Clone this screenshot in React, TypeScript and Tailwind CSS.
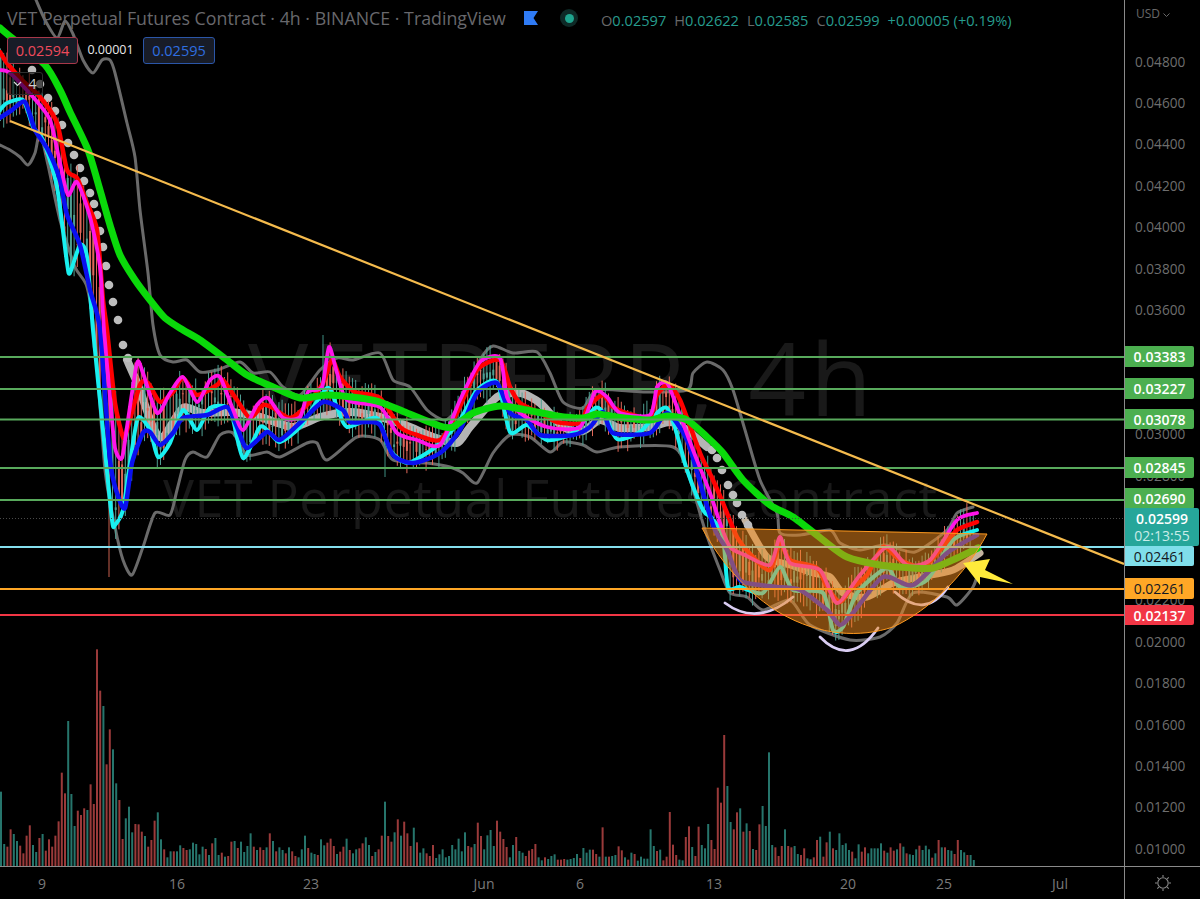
import React from 'react';

// volume tops read off the chart: value + colour, with the baseline each run was read against
const volA = '455g 612g 620r 568r 582g 603g 617r 640r 587r 556r 615g 636g 594r 582g 632r 598r 620r 587r 544r 398r 460r 243g 462g 558g 512r 525r 505r 510g 433r 492r 28r 152r 198g 373r 268r 328g 430g 480r 597r 535g 500g 577g 552r 553r 575r 588g 620r 600r 542r 517g 598g 628r 652g 634g 634r 634g 616g 624r 630r 628g 608g 612g 643g 620g 627r 645g 610r 594g 645g 638r 650g 648r 605r 603g 624r 605g 636g 618g 580g 620r 630g 622r 630r 622g 580r 603g 634r 622g 630g 640r 622g 634r 648r 652g 628g 587g 624r 638g 642g 645r 598g 616g 608r 596r 618r 642g 635r 620r 596g 630r 640g 628g 625r 610r 592g 615g 648r 636g 628r 587r 485g 588r 605r 577g 538r 587g 545r 580r 618r 563g 607r 638g 625g 640r 648r 615r 654g 643g 628g 652g 648g 615g 628g 596g 634g 577g 618r 622r 612g';
const volB = '128r 168r 208g 166g 150g 198g 122r 155r 177r 201r 232g 195g 171r 213g 218g 228r 212r 207r 192r 232g 241g 232r 237g 228g 223g 239r 239r 237r 239g 237g 234g 222g 234r 204g 218g 209g 209r 222r 230g 142r 230g 230r 228g 225g 199r 211r 232g 239r 218g 222r 242g 230g 236g 236g 148g 198g 213r 209g 241r 230r 96r 194r 225r 239g 241g 171r 139r 201g 228r';
const volC = '320r 375g 385g 312g 360r 387r 203r 248r 45r 198g 306g 328r 277r 265g 335r 310g 333r 387g 390r 313r 258g 318g 97g 375g 382r 408r 378r 328g 378r 382r 378g 402g 405r 385r 415g 418g 412r 360r 350g 410r 367r 335g 385r 390g 340g 375g 370g 390g 395r 415g 373g 395r 382r 400g 385g 385g 385g 370g 392r 398g 382r 392r 388g 370r 380g 400r 403g 405g 388g 377r 390g 377g 388g 413r 400g 360r 382g 382r 390g 392g 402r 360r 390g 397g 405r 405g 420g';

const parseVol = (s: string, base: number) =>
  s.split(' ').map((t) => ({ h: (base - parseInt(t)) / 3, up: t.endsWith('g') }));
const volume = [...parseVol(volA, 678), ...parseVol(volB, 258), ...parseVol(volC, 438)];

const red = '0,52 7,63 22,80 40,97 57,123 67,170 77,178 87,203 97,230 103,300 107,330 115,403 123,437 127,430 140,385 148,383 160,402 173,392 183,378 197,395 217,385 223,380 237,400 250,418 263,405 273,408 290,418 307,405 323,383 332,360 340,377 355,392 380,398 400,427 417,435 440,440 457,413 477,370 500,360 510,387 520,403 540,413 557,422 580,423 588,407 603,395 613,407 633,415 650,418 657,395 668,385 680,400 700,453 713,480 723,503 737,537 753,557 770,570 780,543 790,560 817,568 827,587 840,602 850,590 867,575 883,547 900,560 923,567 940,550 957,530 977,522';
const magenta = '0,70 10,73 33,97 50,120 60,163 68,195 77,182 90,217 100,267 104,330 110,397 115,448 122,458 128,420 137,363 143,373 157,413 170,393 183,377 197,402 210,380 220,377 232,407 243,430 257,405 268,398 283,418 300,417 308,392 322,387 329,347 337,373 347,400 380,407 397,433 417,440 440,445 460,400 480,362 500,358 507,397 520,413 547,427 580,427 595,392 607,397 620,413 650,415 657,387 667,383 677,407 693,450 710,493 720,523 730,547 745,555 770,565 780,537 790,563 820,570 837,603 860,575 887,547 907,565 930,560 957,520 977,513';
const blue = '0,118 12,110 25,102 35,130 48,150 60,180 67,215 80,245 90,290 100,330 110,460 117,493 125,508 132,463 143,433 150,432 160,445 173,433 183,418 207,415 227,407 237,427 247,448 267,432 280,440 303,420 323,402 343,410 350,422 367,422 380,425 393,455 413,463 440,453 460,430 477,393 497,383 510,413 527,420 540,435 573,435 590,427 603,412 613,433 650,433 667,413 687,440 703,493 715,530 727,550 740,580 760,585 777,587 800,590 827,610 840,625 853,613 883,577 913,585 947,553 977,535';
const cyan = '0,110 7,103 23,100 33,127 43,140 57,187 67,263 70,273 80,245 87,257 93,330 103,430 112,520 115,525 123,510 130,463 138,418 150,430 158,457 170,443 183,410 197,430 210,408 230,410 243,458 260,427 270,433 280,442 300,427 327,388 337,407 347,427 377,418 390,450 407,463 427,453 440,443 460,420 477,390 497,382 510,432 527,425 547,440 573,433 595,408 605,415 617,439 640,432 667,408 687,470 703,510 712,518 723,537 728,587 740,587 763,593 780,567 793,590 823,593 833,630 843,627 857,593 887,568 900,587 927,580 953,540 977,530';
const green = '0,28 12,38 45,65 60,90 70,112 88,150 100,190 110,225 120,255 135,280 150,300 165,318 183,330 200,340 227,360 247,375 273,387 300,398 327,395 360,398 380,402 407,413 440,426 453,427 473,413 500,406 527,410 557,416 583,418 597,414 617,417 650,420 667,416 687,420 707,437 723,453 743,480 770,505 793,517 823,540 847,557 880,565 913,568 933,568 957,558 978,548';
const band = '127,360 138,385 153,427 163,437 183,408 203,413 230,412 260,417 293,427 320,417 350,412 380,417 410,427 433,437 457,443 470,427 497,397 520,393 540,403 563,427 583,431 600,420 620,428 650,427 670,422 687,430 707,447';
const band2 = '745,520 767,557 790,565 813,573 830,577 843,593 867,597 893,583 920,577 953,570 980,553';
const bbUpper = '36,0 45,20 57,38 65,21 73,34 83,60 93,73 102,60 110,60 115,73 127,123 135,157 140,210 148,273 153,325 160,355 173,362 187,360 200,372 217,370 240,362 253,373 270,372 283,387 300,395 320,370 337,358 353,360 380,353 393,380 410,387 427,410 445,420 460,405 480,360 493,346 513,353 537,352 550,373 563,402 583,408 597,390 643,392 687,390 693,373 707,362 723,370 733,390 745,430 760,480 777,513 780,533 800,535 830,530 840,543 860,550 885,545 915,552 947,530 957,513 973,507';
const bbLower = '0,145 10,150 20,157 28,165 35,153 40,133 48,165 60,220 75,267 87,287 95,340 105,470 115,527 123,560 132,575 143,547 155,513 170,515 177,490 185,460 193,452 207,457 220,435 233,433 247,455 267,452 280,457 307,443 317,443 327,460 357,437 380,440 393,460 427,463 450,467 463,473 477,483 493,453 510,435 530,437 550,452 563,442 583,445 597,452 620,447 673,447 687,470 705,530 720,570 730,593 747,597 763,610 790,600 810,625 850,640 880,637 897,623 913,593 947,597 957,605 973,587 980,567';

const dots = [[32, 70], [40, 84], [48, 98], [55, 111], [62, 125], [68, 143], [74, 155], [80, 168], [84, 181], [90, 193], [94, 204], [97, 215], [100, 231], [103, 247], [106, 266], [109, 285], [113, 302], [118, 320], [123, 345], [128, 358], [712, 450], [717, 458], [722, 470], [728, 485], [733, 495], [737, 503], [742, 515], [748, 525]];

const toPts = (s: string) => s.split(' ').map((p) => p.split(',').map(Number));
const yAt = (pts: number[][], x: number) => {
  for (let i = 1; i < pts.length; i++) {
    if (x <= pts[i][0]) {
      const [x0, y0] = pts[i - 1];
      const [x1, y1] = pts[i];
      return y0 + ((y1 - y0) * (x - x0)) / (x1 - x0 || 1);
    }
  }
  return pts[pts.length - 1][1];
};

// catmull-rom through the read-off points so the averages don't look faceted
const smooth = (s: string) => {
  const p = toPts(s);
  let d = `M${p[0][0]} ${p[0][1]}`;
  for (let i = 0; i < p.length - 1; i++) {
    const a = p[Math.max(i - 1, 0)];
    const b = p[i];
    const c = p[i + 1];
    const e = p[Math.min(i + 2, p.length - 1)];
    const k = 0.12;
    d += ` C${b[0] + (c[0] - a[0]) * k} ${b[1] + (c[1] - a[1]) * k} ${c[0] - (e[0] - b[0]) * k} ${c[1] - (e[1] - b[1]) * k} ${c[0]} ${c[1]}`;
  }
  return d;
};

// candles hang off the averages, with a fixed seed so the picture never shifts
let seed = 7;
const rnd = () => {
  seed = (seed * 16807) % 2147483647;
  return seed / 2147483647;
};
const redPts = toPts(red);
const magPts = toPts(magenta);
const bluePts = toPts(blue);
const cyanPts = toPts(cyan);
const candles = volume.map((v, i) => {
  const x = i * 3.2 + 0.5;
  const ys = [redPts, magPts, bluePts, cyanPts].map((p) => yAt(p, x));
  const top = Math.min(...ys);
  const bot = Math.max(...ys);
  const a = top + rnd() * (bot - top);
  const b = top + rnd() * (bot - top);
  return { x, up: v.up, y1: top - rnd() * 15, y2: bot + rnd() * 16, b1: Math.min(a, b), b2: Math.max(a, b) };
});

const levels = [
  { y: 357, c: '#58a95c' },
  { y: 389, c: '#58a95c' },
  { y: 419.5, c: '#58a95c' },
  { y: 468, c: '#58a95c' },
  { y: 500, c: '#58a95c' },
  { y: 547, c: '#85dfee' },
  { y: 589, c: '#ffa726' },
  { y: 615, c: '#f23645' },
];

// blanks are the rows the level badges sit on in the reference
const ticks = ['0.04800', '0.04600', '0.04400', '0.04200', '0.04000', '0.03800', '0.03600', '', '', '0.03000', '0.02800', '', '', '0.02200', '0.02000', '0.01800', '0.01600', '0.01400', '0.01200', '0.01000'];

const Line = ({ d, c, w }: { d: string; c: string; w: number }) => (
  <path d={smooth(d)} fill="none" stroke={c} strokeWidth={w} strokeLinejoin="round" strokeLinecap="round" />
);

const Chart = () => (
  <svg viewBox="0 0 1124 866" className="absolute inset-0 w-[1124px] h-[866px]">
    <Line d={bbUpper} c="#6a6a6a" w={3} />
    <Line d={bbLower} c="#6a6a6a" w={3} />
    <Line d={band} c="#b4b4b4" w={8} />
    <Line d={band2} c="#c4b4a0" w={7} />
    {dots.map(([x, y]) => (
      <circle key={x} cx={x} cy={y} r={4.3} fill="#bdbdbd" />
    ))}
    {volume.map((v, i) => (
      <rect key={i} x={i * 3.2} y={866 - v.h} width={2} height={v.h} fill={v.up ? '#26756c' : '#9a3a3a'} />
    ))}
    {candles.map((k, i) => (
      <g key={i} stroke={k.up ? '#4f9f92' : '#e0685a'}>
        <line x1={k.x} x2={k.x} y1={k.y1} y2={k.y2} strokeWidth={1} />
        <line x1={k.x} x2={k.x} y1={k.b1} y2={k.b2} strokeWidth={2} />
      </g>
    ))}
    <line x1={109} x2={109} y1={430} y2={577} stroke="#c8604f" strokeWidth={1} />
    <line x1={385} x2={385} y1={430} y2={477} stroke="#3f8f82" strokeWidth={1} />
    <line x1={323} x2={323} y1={335} y2={380} stroke="#3f8f82" strokeWidth={1} />
    <Line d={cyan} c="#19f0f0" w={4} />
    <Line d={blue} c="#0a10f0" w={4.5} />
    <Line d={red} c="#ff0000" w={4.5} />
    <Line d={magenta} c="#ff14e8" w={3.8} />
    <Line d={green} c="#0ad90a" w={7} />
    <line x1={0} x2={1124} y1={518.5} y2={518.5} stroke="#4a4a4a" strokeWidth={1} strokeDasharray="1 2" />
    {levels.map((l) => (
      <line key={l.y} x1={0} x2={1124} y1={l.y} y2={l.y} stroke={l.c} strokeWidth={2} />
    ))}
    <g fill="none" stroke="#d9ccf2" strokeWidth={2.8} strokeLinecap="round">
      <path d="M725 603 Q757 627 793 597" />
      <path d="M820 637 Q850 668 878 628" />
      <path d="M895 592 Q925 620 948 587" />
    </g>
    <path
      d="M702 528 L987 534 C965 575 930 610 893 627 C860 638 820 636 780 613 C750 595 722 565 702 528 Z"
      fill="#ef8a1d"
      fillOpacity={0.52}
      stroke="#ff9a1f"
      strokeWidth={1}
    />
    <line x1={10} y1={121} x2={1124} y2={564} stroke="#f5bb4d" strokeWidth={2.2} />
    <polygon points="963,563 990,559 985,570 1013,584 980,577 980,585" fill="#ffeb3b" />
  </svg>
);

export default function App() {
  return (
    <div className="w-[1200px] h-[899px] bg-black flex flex-col overflow-hidden font-['Open_Sans',sans-serif] text-[#7d7d7d]">
      <div className="flex h-[867px] border-b border-[#8a8a8a]">
        <div className="relative w-[1124px] overflow-hidden">
          <div className="absolute left-[248px] top-[312px] text-[#191919] text-[101px] leading-[130px] tracking-[4px] whitespace-nowrap">VETPERP, 4h</div>
          <div className="absolute left-[163px] top-[452px] text-[#191919] text-[52px] leading-[90px] tracking-[0.6px] whitespace-nowrap">VET Perpetual Futures Contract</div>
          <Chart />
          <div className="absolute left-[7px] top-0 flex flex-col">
            <div className="flex items-center h-[36px] whitespace-nowrap">
              <span className="text-[17.8px] text-[#68686c] w-[517px] shrink-0">VET Perpetual Futures Contract · 4h · BINANCE · TradingView</span>
              <svg width="14" height="14" viewBox="0 0 14 14" className="shrink-0">
                <polygon points="0,0 14,0 9.5,7 14,14 0,14" fill="#2f7bf5" />
              </svg>
              <span className="ml-[22px] w-[18px] h-[18px] rounded-full bg-[#0e2a27] flex items-center justify-center shrink-0">
                <span className="w-[9px] h-[9px] rounded-full bg-[#1fa58f]" />
              </span>
              <span className="ml-[23px] text-[14.6px] text-[#279c8e] flex gap-[8px] mt-[5px]">
                <span><span className="text-[#686868]">O</span>0.02597</span>
                <span><span className="text-[#686868]">H</span>0.02622</span>
                <span><span className="text-[#686868]">L</span>0.02585</span>
                <span><span className="text-[#686868]">C</span>0.02599</span>
                <span>+0.00005 (+0.19%)</span>
              </span>
            </div>
            <div className="flex items-center h-[27px] mt-px text-[14.5px] whitespace-nowrap">
              <span className="w-[71px] h-[27px] flex items-center justify-center rounded-[3px] border border-[#a8384a] bg-[#181c27] text-[#ef4a5c]">0.02594</span>
              <span className="w-[65px] text-center text-[12.5px] text-[#e8e8e8]">0.00001</span>
              <span className="w-[72px] h-[27px] flex items-center justify-center rounded-[3px] border border-[#2b56a8] bg-[#181c27] text-[#2f6fe0]">0.02595</span>
            </div>
            <div className="flex items-center justify-center gap-[6px] w-[36px] h-[23px] mt-[8px] rounded-[3px] border border-[#2e2e2e] bg-[#000000]/60 text-[#d0d0d0] text-[14px]">
              <svg width="9" height="6" viewBox="0 0 9 6" fill="none" stroke="#d8d8d8" strokeWidth="1.2">
                <path d="M1 1l3.5 3.5L8 1" />
              </svg>
              4
            </div>
          </div>
        </div>
        <div className="relative w-[76px] border-l border-[#8a8a8a] text-[13.6px]">
          <div className="h-[41px] pl-[11px] pt-[5px] flex items-start gap-[3px] text-[12px] text-[#686868]">
            USD
            <svg width="7" height="5" viewBox="0 0 7 5" fill="none" stroke="#686868" className="mt-[8px]">
              <path d="M.5.5l3 3 3-3" />
            </svg>
          </div>
          <div className="flex flex-col">
            {ticks.map((t, i) => (
              <div key={i} className="h-[41.45px] pl-[10px] flex items-center text-[#6e6e6e]">{t}</div>
            ))}
          </div>
          <div className="absolute left-0 top-[346px] flex flex-col items-start font-semibold text-[14px] text-white">
            <span className="w-[69px] h-[21px] rounded-r-[2px] bg-[#4caf50] flex items-center justify-center">0.03383</span>
            <span className="w-[69px] h-[21px] mt-[11px] rounded-r-[2px] bg-[#4caf50] flex items-center justify-center">0.03227</span>
            <span className="w-[69px] h-[20px] mt-[10px] rounded-r-[2px] bg-[#4caf50] flex items-center justify-center">0.03078</span>
            <span className="w-[69px] h-[21px] mt-[28px] rounded-r-[2px] bg-[#4caf50] flex items-center justify-center">0.02845</span>
            <span className="w-[69px] h-[21px] mt-[10px] rounded-r-[2px] bg-[#4caf50] flex items-center justify-center">0.02690</span>
            <span className="w-[74px] h-[38px] -mt-px rounded-r-[2px] bg-[#26a69a] flex flex-col items-center justify-center leading-[17px]">
              <span>0.02599</span>
              <span className="font-normal text-[#c9ece8]">02:13:55</span>
            </span>
            <span className="w-[69px] h-[20px] rounded-r-[2px] bg-[#80deea] text-[#131722] font-normal flex items-center justify-center">0.02461</span>
            <span className="w-[69px] h-[21px] mt-[12px] rounded-r-[2px] bg-[#ffa726] text-[#131722] font-normal flex items-center justify-center">0.02261</span>
            <span className="w-[69px] h-[20px] mt-[6px] rounded-r-[2px] bg-[#f23645] flex items-center justify-center">0.02137</span>
          </div>
        </div>
      </div>
      <div className="flex h-[32px]">
        <div className="flex items-center w-[1124px] text-[14px] text-[#7a7a7a]">
          <span className="w-[40px] ml-[22px] text-center">9</span>
          <span className="w-[40px] ml-[95px] text-center">16</span>
          <span className="w-[40px] ml-[94px] text-center">23</span>
          <span className="w-[40px] ml-[133px] text-center">Jun</span>
          <span className="w-[40px] ml-[56px] text-center">6</span>
          <span className="w-[40px] ml-[94px] text-center">13</span>
          <span className="w-[40px] ml-[94px] text-center">20</span>
          <span className="w-[40px] ml-[56px] text-center">25</span>
          <span className="w-[40px] ml-[76px] text-center">Jul</span>
        </div>
        <div className="w-[76px] border-l border-[#8a8a8a] flex items-center justify-center">
          <svg width="18" height="18" viewBox="0 0 18 18" fill="none" stroke="#8a8a8a" strokeWidth="1.1" className="mr-[-1px]">
            <circle cx="9" cy="9" r="5.2" />
            <path d="M9 1v2M9 15v2M1 9h2M15 9h2M3.3 3.3l1.5 1.5M13.2 13.2l1.5 1.5M14.7 3.3l-1.5 1.5M4.8 13.2l-1.5 1.5" />
          </svg>
        </div>
      </div>
    </div>
  );
}
